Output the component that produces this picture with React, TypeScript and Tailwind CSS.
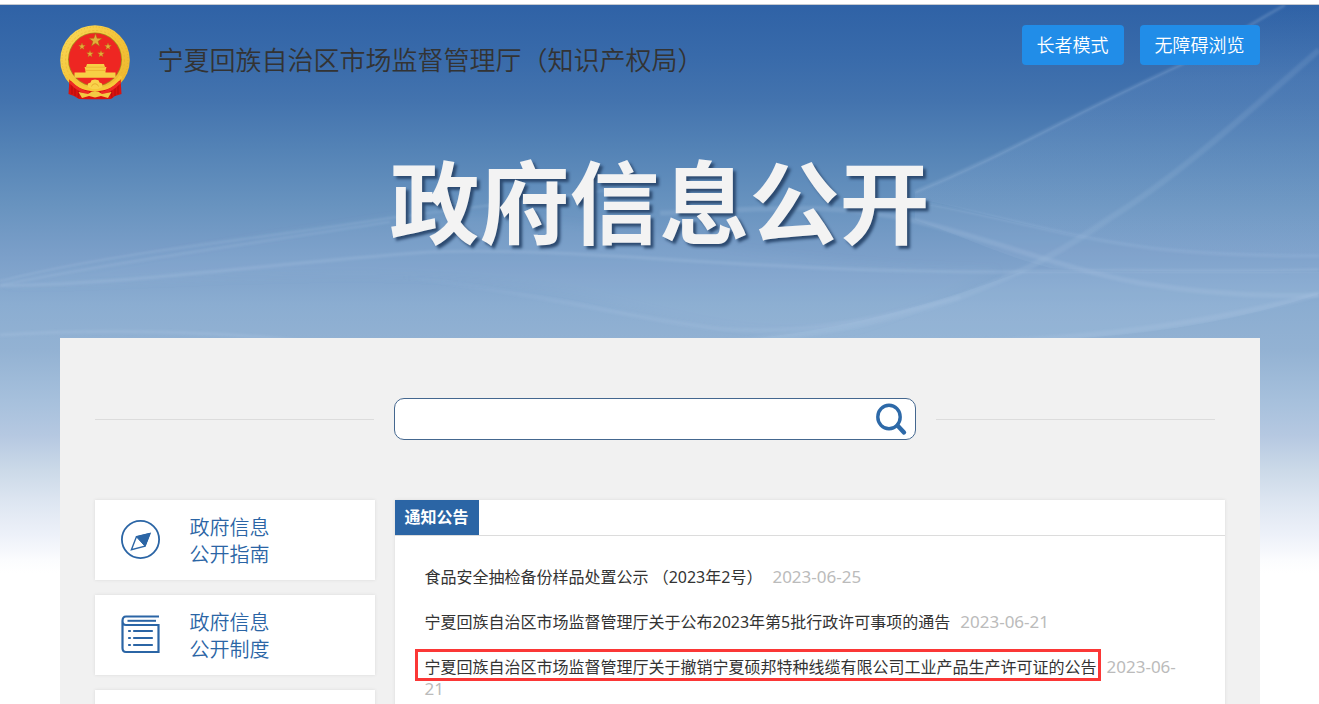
const guides = [
  { lines: ['政府信息', '公开指南'], icon: CompassIcon },
  { lines: ['政府信息', '公开制度'], icon: BookIcon },
]

const notices = [
  { title: '食品安全抽检备份样品处置公示 （2023年2号）', date: '2023-06-25' },
  { title: '宁夏回族自治区市场监督管理厅关于公布2023年第5批行政许可事项的通告', date: '2023-06-21' },
  {
    title: '宁夏回族自治区市场监督管理厅关于撤销宁夏硕邦特种线缆有限公司工业产品生产许可证的公告',
    date: '2023-06-21',
    marked: true,
  },
]

const STAR = 'M0 -1L.235 -.324L.951 -.309L.38 .124L.588 .809L0 .4L-.588 .809L-.38 .124L-.951 -.309L-.235 -.324Z'

const smallStars = [
  [22, 21.5],
  [48, 21.5],
  [30, 29],
  [41, 29],
]

function Emblem() {
  return (
    <svg viewBox="0 0 70 75" className="h-[75px] w-[70px] shrink-0" aria-hidden="true">
      <defs>
        <linearGradient id="gold" x1="0" y1="0" x2="1" y2="1">
          <stop offset="0" stopColor="#f9dc5c" />
          <stop offset="0.5" stopColor="#f4c43a" />
          <stop offset="1" stopColor="#edb52b" />
        </linearGradient>
      </defs>
      <circle cx="35" cy="35" r="34.8" fill="url(#gold)" />
      <circle cx="35" cy="35" r="33" fill="none" stroke="#e2a728" strokeWidth="1" strokeDasharray="1 2" strokeOpacity="0.6" />
      <circle cx="35" cy="35" r="29.5" fill="none" stroke="#e7ae2b" strokeWidth="1" strokeDasharray="2 2" strokeOpacity="0.5" />
      <circle cx="35" cy="34.5" r="27" fill="#a88a1c" />
      <circle cx="35" cy="34.5" r="26.2" fill="#ee2622" />
      <g fill="#e3ae3a" stroke="#a8660f" strokeWidth="0.08">
        <path d={STAR} transform="translate(35.5 15.5) scale(7)" />
        {smallStars.map(([x, y]) => (
          <path key={`${x}-${y}`} d={STAR} transform={`translate(${x} ${y}) scale(3.7)`} />
        ))}
      </g>
      {/* gate */}
      <g fill="#f7cf45">
        <path d="M27 39H44L45 42H26Z" />
        <path d="M24.5 42H46.5L45.5 45.5H25.5Z" />
        <path d="M25.5 45H45.5V47.5H55.5V52.7H14.5V47.5H25.5Z" />
      </g>
      <path d="M26 42.2H45M26 45.4H45" stroke="#e39a20" strokeWidth="0.5" />
      {/* drapes and cog */}
      <path d="M9.5 53C14 58 21 62.5 29 64.5L35 67L41 64.5C49 62.5 56 58 60.5 53L61.5 69L55 71L51 74Q35 74.5 19 74L14 71L8.5 69Z" fill="#d9120f" />
      <path d="M12 58V69M15 60V71M19 63L18 73M58 58V69M55 60V71M51 63L52 73" stroke="#a50b0b" strokeWidth="0.7" />
      <path d="M9 51Q18 64.5 35 64.5Q52 64.5 61 51" fill="none" stroke="#f6c838" strokeWidth="3.4" />
      <path d="M27.5 62L28 58.5L30.5 57.5L31.5 55.2L35 54.4L38.5 55.2L39.5 57.5L42 58.5L42.5 62L38 64H32Z" fill="#f9d34b" />
      <path d="M31.5 61.5A3.6 3.6 0 0 1 38.5 61.5" fill="none" stroke="#e5a428" strokeWidth="0.8" />
      <path d="M10 57Q20 67 29 68M60 57Q50 67 41 68" fill="none" stroke="#ef2a24" strokeWidth="3" />
      <path d="M18.5 67L28 69L32 66.5H38L42 69L51.5 67L48 73L41 71L35 72.5L29 71L22 73Z" fill="#f3ca43" />
    </svg>
  )
}

function SearchIcon() {
  return (
    <svg viewBox="0 0 34 34" className="h-[34px] w-[34px]" fill="none" stroke="#2d69a8" aria-hidden="true">
      <ellipse cx="15" cy="15" rx="11.2" ry="11.8" strokeWidth="3.4" />
      <path d="M23.5 23.5L30 30.5" strokeWidth="4.4" strokeLinecap="round" />
    </svg>
  )
}

function CompassIcon() {
  return (
    <svg viewBox="0 0 40 40" className="h-10 w-10" fill="none" stroke="#2b65a5" aria-hidden="true">
      <circle cx="20.5" cy="19.5" r="18.6" strokeWidth="1.8" />
      <path d="M16.4 16.8L30 13.4L25 26.2L11.4 29.8Z" strokeWidth="1.4" />
      <path d="M16.4 16.8L30 13.4L25 26.2Z" fill="#2b65a5" strokeWidth="1" />
    </svg>
  )
}

function BookIcon() {
  return (
    <svg viewBox="0 0 40 40" className="h-10 w-10" fill="none" stroke="#2b65a5" aria-hidden="true">
      <path d="M39 1.5H6Q2.5 1.5 2.5 6V33Q2.5 37 6 37H38.5V10H6Q2.5 10 2.5 6" strokeWidth="2.2" />
      <path d="M7.5 5.8H36" strokeWidth="2" />
      <path d="M14 16H32M14 23H32M14 30H32" strokeWidth="2.2" strokeLinecap="round" />
      <path d="M9 16H10M9 23H10M9 30H10" strokeWidth="2.2" strokeLinecap="round" />
    </svg>
  )
}

function Waves() {
  return (
    <svg
      viewBox="0 0 1319 340"
      preserveAspectRatio="none"
      className="absolute inset-x-0 top-0 h-[340px] w-full"
      fill="none"
      aria-hidden="true"
    >
      <defs>
        <linearGradient id="veil" gradientUnits="userSpaceOnUse" x1="0" y1="0" x2="0" y2="250">
          <stop offset="0" stopColor="#8fb0dc" stopOpacity="0" />
          <stop offset="0.3" stopColor="#8fb0dc" stopOpacity="0.14" />
          <stop offset="1" stopColor="#a9c4e6" stopOpacity="0.14" />
        </linearGradient>
        <linearGradient id="fadeIn" gradientUnits="userSpaceOnUse" x1="400" y1="0" x2="620" y2="0">
          <stop offset="0" stopColor="#b6cdea" stopOpacity="0" />
          <stop offset="1" stopColor="#b6cdea" />
        </linearGradient>
        <filter id="soft" x="-5%" y="-5%" width="110%" height="110%">
          <feGaussianBlur stdDeviation="1.2" />
        </filter>
        <filter id="haze" x="-5%" y="-5%" width="110%" height="110%">
          <feGaussianBlur stdDeviation="4" />
        </filter>
      </defs>
      <path d="M915 187C1010 148 1060 115 1180 60C1220 40 1240 25 1285 0H1319V251C1270 251 1210 250 1150 243C1060 231 1000 211 915 193Z" fill="url(#veil)" />
      <path d="M915 197C1000 211 1060 231 1150 243C1210 250 1270 251 1319 251V265C1200 268 1100 266 1050 263C1000 250 960 230 915 215Z" fill="#a9c4e6" fillOpacity="0.12" />
      <path d="M1020 267H1319V289C1240 315 1150 333 1000 337H700C800 333 900 312 1020 267Z" fill="#b3cbe8" fillOpacity="0.14" />
      <path d="M0 280C150 250 270 232 400 212C560 196 720 262 1000 265C950 290 910 305 860 322C740 340 650 300 560 285C380 255 160 280 0 280Z" fill="#a9c4e6" fillOpacity="0.07" filter="url(#haze)" />
      <g stroke="#b6cdea" filter="url(#soft)">
        <path d="M915 187C1010 148 1060 115 1180 60C1220 40 1240 25 1285 0" strokeWidth="3" strokeOpacity="0.22" />
        <path d="M1319 45C1250 105 1180 170 1110 213C1040 262 1000 275 960 292C880 320 800 332 700 340" strokeWidth="6" strokeOpacity="0.13" />
        <path d="M0 276C110 248 230 238 390 213C480 200 550 195 640 180" strokeWidth="2" strokeOpacity="0.22" />
        <path d="M0 280C130 255 240 240 390 217" strokeWidth="2" strokeOpacity="0.22" />
        <path d="M0 281C150 278 270 258 430 247C600 242 720 266 1000 267C1140 264 1240 268 1319 265" strokeWidth="3" strokeOpacity="0.22" />
        <path d="M660 208C760 205 830 195 920 217C1010 240 1060 263 1140 278C1200 288 1260 292 1319 290" strokeWidth="5" strokeOpacity="0.18" />
        <path d="M920 197C1000 211 1060 231 1150 243C1210 250 1270 251 1319 251" strokeWidth="3" strokeOpacity="0.16" />
        <path d="M400 272C530 286 640 315 720 324C800 330 870 316 960 292" stroke="url(#fadeIn)" strokeWidth="4" strokeOpacity="0.16" />
        <path d="M0 330C100 324 220 326 300 336" strokeWidth="3" strokeOpacity="0.22" />
        <path d="M940 337C1060 337 1190 323 1319 289" strokeWidth="5" strokeOpacity="0.18" />
      </g>
    </svg>
  )
}

export default function App() {
  return (
    <div className="min-h-screen bg-white pt-1 font-['Noto_Sans','Noto_Sans_CJK_SC',sans-serif] text-base text-[#333]">
      <div className="relative border-t border-[#c5c9d0] bg-[linear-gradient(180deg,#2f62a6_0px,#386aaa_50px,#4373ae_95px,#5483b6_145px,#6893bf_200px,#7b9fc9_250px,#8badd1_300px,#93b2d3_345px,#a6c0dc_395px,#b5c8e1_430px,#cbd9e8_465px,#dfe7f2_500px,#edf1f9_530px,#fbfcfe_555px,#ffffff_568px)]">
        <Waves />

        <div className="relative mx-auto max-w-[1200px]">
          <header className="flex items-start justify-between pt-5">
            <a href="#" className="flex items-start gap-7">
              <Emblem />
              <span className="pt-[17px] text-[26px] leading-9 font-[350]">宁夏回族自治区市场监督管理厅（知识产权局）</span>
            </a>
            <div className="flex gap-4 text-lg text-white">
              <button type="button" className="h-10 rounded bg-[#218de8] px-[15px] font-[350]">长者模式</button>
              <button type="button" className="h-10 rounded bg-[#218de8] px-[15px] font-[350]">无障碍浏览</button>
            </div>
          </header>

          <h1 className="pt-[37px] pb-[71px] text-center text-[90px] leading-[130px] font-bold text-[#f3f3f3] [text-shadow:3px_3px_3px_#2c4a70]">
            政府信息公开
          </h1>

          <main className="bg-[#f1f1f1] px-[35px] pt-[60px] pb-9">
            <form className="flex items-center gap-5 pr-[10px]">
              <span className="h-px flex-1 bg-[#dcdcdc]" />
              <div className="flex h-[42px] w-[522px] items-center rounded-[10px] border border-[#44678f] bg-white pr-[7px]">
                <input type="text" aria-label="搜索" className="h-full min-w-0 flex-1 rounded-[10px] bg-transparent px-3 outline-none" />
                <button type="submit" aria-label="搜索">
                  <SearchIcon />
                </button>
              </div>
              <span className="h-px flex-1 bg-[#dcdcdc]" />
            </form>

            <div className="mt-[60px] flex items-start gap-5">
              <ul className="flex w-[280px] shrink-0 flex-col gap-[15px]">
                {guides.map(({ lines, icon: Icon }) => (
                  <li key={lines[1]}>
                    <a
                      href="#"
                      className="flex h-20 items-start gap-[30px] bg-white px-[25px] text-xl leading-[27px] font-[350] text-[#2b65a5] shadow-[0_0_3px_#d9d9d9]"
                    >
                      <span className="pt-5">
                        <Icon />
                      </span>
                      <span className="pt-[14px]">
                        {lines[0]}
                        <br />
                        {lines[1]}
                      </span>
                    </a>
                  </li>
                ))}
                <li className="h-20 bg-white shadow-[0_0_3px_#d9d9d9]" />
              </ul>

              <section className="min-w-0 flex-1 self-stretch bg-white shadow-[0_0_3px_#d9d9d9]">
                <div className="flex border-b border-[#dcdcdc]">
                  <h2 className="bg-[#2b65a5] px-[10px] leading-[35px] font-bold text-white">通知公告</h2>
                </div>
                <ul className="flex flex-col gap-[23px] px-[30px] pt-[30px]">
                  {notices.map(({ title, date, marked }) => (
                    <li key={title} className="leading-[21px]">
                      <a href="#" className="relative">
                        {title}
                        {marked && (
                          <span className="absolute -top-[7px] -right-1 -bottom-[3px] -left-[10px] border-3 border-[#fb3736]" />
                        )}
                      </a>
                      <span className="ml-[10px] text-[17px] text-[#bbb]">{date}</span>
                    </li>
                  ))}
                </ul>
              </section>
            </div>
          </main>
        </div>
      </div>
    </div>
  )
}
